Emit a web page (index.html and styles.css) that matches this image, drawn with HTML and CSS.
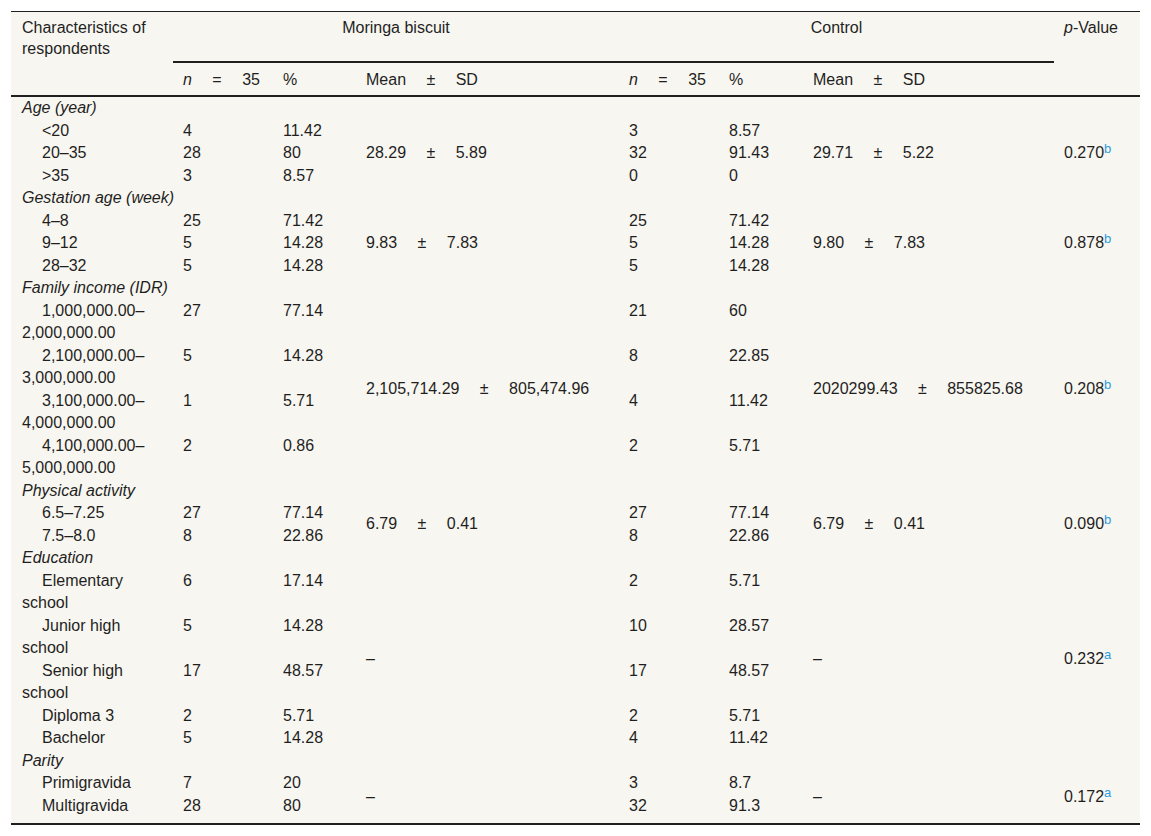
FILE: index.html
```html
<!DOCTYPE html>
<html lang="en">
<head>
<meta charset="utf-8">
<title>Characteristics of respondents</title>
<link rel="stylesheet" href="styles.css">
</head>
<body>
<div class="wrap">
<table class="data">
  <colgroup>
    <col class="c1"><col class="c2"><col class="c3"><col class="c4"><col class="c5"><col class="c6"><col class="c7"><col class="c8">
  </colgroup>
  <thead>
    <tr class="h1">
      <th rowspan="2" class="first">Characteristics of respondents</th>
      <th colspan="3" class="group">Moringa biscuit</th>
      <th colspan="3" class="group">Control</th>
      <th rowspan="2"><i>p</i>-Value</th>
    </tr>
    <tr class="h2">
      <th><span class="sp"><i>n</i> = 35</span></th>
      <th>%</th>
      <th><span class="sp">Mean ± SD</span></th>
      <th><span class="sp"><i>n</i> = 35</span></th>
      <th>%</th>
      <th><span class="sp">Mean ± SD</span></th>
    </tr>
  </thead>
  <tbody>
    <tr><td colspan="8" class="cat">Age (year)</td></tr>
    <tr><td class="sub">&lt;20</td><td>4</td><td>11.42</td><td rowspan="3" class="mid"><span class="sp">28.29 ± 5.89</span></td><td>3</td><td>8.57</td><td rowspan="3" class="mid"><span class="sp">29.71 ± 5.22</span></td><td rowspan="3" class="mid">0.270<sup>b</sup></td></tr>
    <tr><td class="sub">20–35</td><td>28</td><td>80</td><td>32</td><td>91.43</td></tr>
    <tr><td class="sub">&gt;35</td><td>3</td><td>8.57</td><td>0</td><td>0</td></tr>

    <tr><td colspan="8" class="cat">Gestation age (week)</td></tr>
    <tr><td class="sub">4–8</td><td>25</td><td>71.42</td><td rowspan="3" class="mid"><span class="sp">9.83 ± 7.83</span></td><td>25</td><td>71.42</td><td rowspan="3" class="mid"><span class="sp">9.80 ± 7.83</span></td><td rowspan="3" class="mid">0.878<sup>b</sup></td></tr>
    <tr><td class="sub">9–12</td><td>5</td><td>14.28</td><td>5</td><td>14.28</td></tr>
    <tr><td class="sub">28–32</td><td>5</td><td>14.28</td><td>5</td><td>14.28</td></tr>

    <tr><td colspan="8" class="cat">Family income (IDR)</td></tr>
    <tr><td class="sub">1,000,000.00– 2,000,000.00</td><td>27</td><td>77.14</td><td rowspan="4" class="mid"><span class="sp">2,105,714.29 ± 805,474.96</span></td><td>21</td><td>60</td><td rowspan="4" class="mid"><span class="sp">2020299.43 ± 855825.68</span></td><td rowspan="4" class="mid">0.208<sup>b</sup></td></tr>
    <tr><td class="sub">2,100,000.00– 3,000,000.00</td><td>5</td><td>14.28</td><td>8</td><td>22.85</td></tr>
    <tr><td class="sub">3,100,000.00– 4,000,000.00</td><td>1</td><td>5.71</td><td>4</td><td>11.42</td></tr>
    <tr><td class="sub">4,100,000.00– 5,000,000.00</td><td>2</td><td>0.86</td><td>2</td><td>5.71</td></tr>

    <tr><td colspan="8" class="cat">Physical activity</td></tr>
    <tr><td class="sub">6.5–7.25</td><td>27</td><td>77.14</td><td rowspan="2" class="mid"><span class="sp">6.79 ± 0.41</span></td><td>27</td><td>77.14</td><td rowspan="2" class="mid"><span class="sp">6.79 ± 0.41</span></td><td rowspan="2" class="mid">0.090<sup>b</sup></td></tr>
    <tr><td class="sub">7.5–8.0</td><td>8</td><td>22.86</td><td>8</td><td>22.86</td></tr>

    <tr><td colspan="8" class="cat">Education</td></tr>
    <tr><td class="sub">Elementary school</td><td>6</td><td>17.14</td><td rowspan="5" class="mid">–</td><td>2</td><td>5.71</td><td rowspan="5" class="mid">–</td><td rowspan="5" class="mid">0.232<sup>a</sup></td></tr>
    <tr><td class="sub">Junior high school</td><td>5</td><td>14.28</td><td>10</td><td>28.57</td></tr>
    <tr><td class="sub">Senior high school</td><td>17</td><td>48.57</td><td>17</td><td>48.57</td></tr>
    <tr><td class="sub">Diploma 3</td><td>2</td><td>5.71</td><td>2</td><td>5.71</td></tr>
    <tr><td class="sub">Bachelor</td><td>5</td><td>14.28</td><td>4</td><td>11.42</td></tr>

    <tr><td colspan="8" class="cat">Parity</td></tr>
    <tr><td class="sub">Primigravida</td><td>7</td><td>20</td><td rowspan="2" class="mid">–</td><td>3</td><td>8.7</td><td rowspan="2" class="mid">–</td><td rowspan="2" class="mid">0.172<sup>a</sup></td></tr>
    <tr class="last"><td class="sub">Multigravida</td><td>28</td><td>80</td><td>32</td><td>91.3</td></tr>
  </tbody>
</table>
</div>
</body>
</html>
```
FILE: styles.css
```css
html, body {
  margin: 0;
  padding: 0;
  background: #ffffff;
}

body {
  font-family: "Liberation Sans", Arial, sans-serif;
  font-size: 16px;
  color: #1f1f1f;
}

.wrap {
  padding: 11px;
}

.data {
  width: 1129px;
  table-layout: fixed;
  border-collapse: collapse;
  background: #f8f6f0;
  border-top: 1px solid #1f1f1f;
  border-bottom: 2px solid #1f1f1f;
}

.c1 { width: 162px; }
.c2 { width: 100px; }
.c3 { width: 83px; }
.c4 { width: 263px; }
.c5 { width: 100px; }
.c6 { width: 84px; }
.c7 { width: 251px; }
.c8 { width: 86px; }

.data th,
.data td {
  font-weight: normal;
  text-align: left;
  vertical-align: top;
  padding: 0 10px;
  line-height: 22.5px;
}

.data th:first-child,
.data td:first-child {
  padding-left: 11px;
}

.data thead .h1 {
  height: 50px;
}

.data thead .h1 th {
  padding-top: 5px;
  padding-bottom: 0;
  line-height: 21px;
}

.data thead .h1 th.group {
  text-align: center;
  border-bottom: 2px solid #1f1f1f;
}

.data thead .h2 {
  height: 34px;
  border-bottom: 2px solid #1f1f1f;
}

.data thead .h2 th {
  padding-top: 6px;
  padding-bottom: 4px;
  padding-left: 10px;
  vertical-align: top;
}

.data td.cat {
  font-style: italic;
}

.data td.sub {
  text-indent: 20px;
}

.data td.mid {
  vertical-align: middle;
}

.data tr.last td {
  padding-bottom: 6px;
}

.sp {
  word-spacing: 16px;
}

sup {
  color: #2c9ddf;
  font-size: 13px;
  line-height: 0;
  vertical-align: 5px;
}
```
